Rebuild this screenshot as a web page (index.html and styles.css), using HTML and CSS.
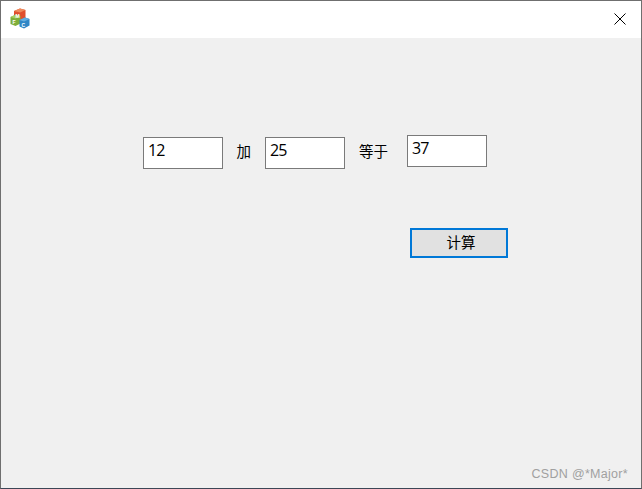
FILE: index.html
```html
<!DOCTYPE html>
<html lang="zh">
<head>
<meta charset="utf-8">
<title>计算</title>
<link rel="stylesheet" href="styles.css">
</head>
<body>
<div class="window">
  <header class="titlebar">
    <svg class="app-icon" width="20" height="21" viewBox="0 0 20 21">
      <path d="M4 3 L10 0.5 L15.5 2 L15.5 10 L10 13 L4 11 Z" fill="#e0502e"/>
      <path d="M4 3 L10 0.5 L15.5 2 L10 4.5 Z" fill="#ee8a5c"/>
      <path d="M0.5 9 L6 6.5 L10.5 8 L10.5 15.5 L5.5 18 L0.5 16 Z" fill="#7fae3a"/>
      <path d="M0.5 9 L6 6.5 L10.5 8 L5.5 10.5 Z" fill="#a8cf62"/>
      <path d="M9.5 12 L15 9.5 L19.5 11 L19.5 17.5 L14 20.5 L9.5 18.5 Z" fill="#2f86c6"/>
      <path d="M9.5 12 L15 9.5 L19.5 11 L14 13.5 Z" fill="#62aee0"/>
      <text class="icon-letter" x="5.5" y="9.5">M</text>
      <text class="icon-letter" x="2.5" y="16">F</text>
      <text class="icon-letter" x="11.5" y="18.5">C</text>
    </svg>
    <svg class="close-icon" width="12" height="12" viewBox="0 0 12 12">
      <path d="M0.5 0.5 L11.5 11.5 M11.5 0.5 L0.5 11.5" stroke="#000" stroke-width="1" fill="none"/>
    </svg>
  </header>
  <main class="client">
    <div class="sum-row">
      <input class="field" type="text" value="12">
      <span class="op op-plus">加</span>
      <input class="field" type="text" value="25">
      <span class="op op-equals">等于</span>
      <input class="field field-result" type="text" value="37">
    </div>
    <button class="calc-btn" type="button">计算</button>
    <div class="watermark">CSDN @*Major*</div>
  </main>
</div>
</body>
</html>
```
FILE: styles.css
```css
* { box-sizing: border-box; }
html, body { margin: 0; padding: 0; }
body { width: 642px; height: 489px; overflow: hidden; font-family: "Open Sans", "Noto Sans CJK SC", sans-serif; }
.window {
  width: 642px;
  height: 489px;
  display: flex;
  flex-direction: column;
  border: 1px solid #6f6f6f;
  border-bottom-color: #3c4656;
  background: #f0f0f0;
}
.titlebar {
  height: 37px;
  flex: none;
  background: #fff;
  display: flex;
  align-items: center;
  justify-content: space-between;
  padding: 0 15px 2px 9px;
}
.app-icon { display: block; }
.icon-letter { font-family: "Liberation Sans", sans-serif; font-size: 5px; font-weight: 700; fill: #fff; }
.close-icon { display: block; }
.client {
  flex: 1;
  display: flex;
  flex-direction: column;
  padding: 99px 0 0 142px;
  background: #f0f0f0;
}
.sum-row { display: flex; align-items: flex-start; height: 32px; }
.field {
  width: 80px;
  height: 32px;
  border: 1px solid #7a7a7a;
  background: #fff;
  padding: 0 4px 7px;
  margin: 0;
  font: 16px "Open Sans", sans-serif;
  letter-spacing: -0.8px;
  color: #000;
  outline: none;
}
.field-result { margin-top: -2px; }
.op {
  font: 14.5px/28px "Noto Sans CJK SC", sans-serif;
  color: #000;
  white-space: nowrap;
}
.op-plus { width: 42px; padding-left: 13.5px; }
.op-equals { width: 62px; padding-left: 14px; }
.calc-btn {
  align-self: flex-start;
  width: 98px;
  height: 30px;
  margin: 59px 0 0 267px;
  border: 2px solid #0078d7;
  background: #e1e1e1;
  padding: 0 0 3px 4px;
  font: 14.5px "Noto Sans CJK SC", sans-serif;
  color: #000;
}
.watermark {
  margin: 208px 13px 0 auto;
  font: 12.5px/16px "Liberation Sans", sans-serif;
  letter-spacing: 0.3px;
  color: #a0a0a0;
  white-space: nowrap;
}
```
